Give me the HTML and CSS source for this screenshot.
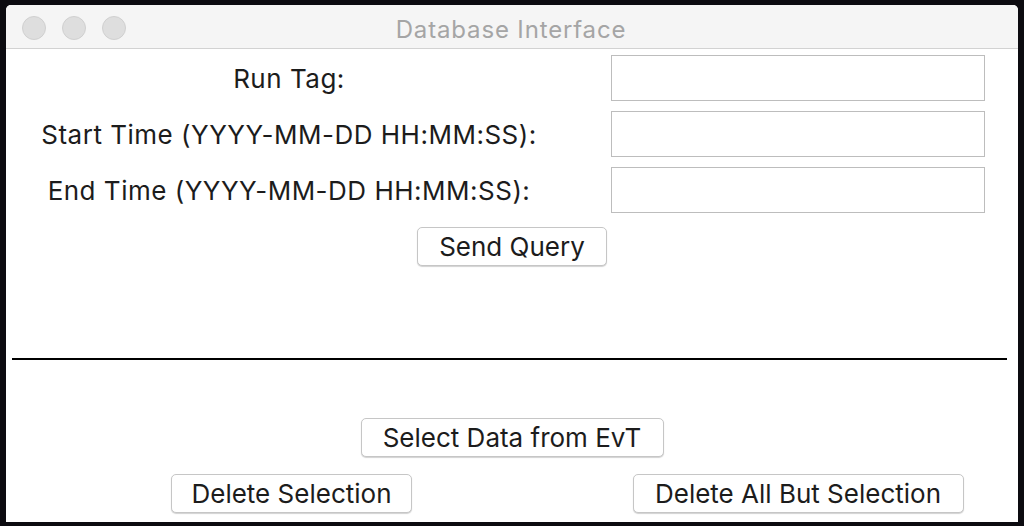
FILE: index.html
```html
<!DOCTYPE html>
<html lang="en">
<head>
<meta charset="utf-8">
<title>Database Interface</title>
<link rel="stylesheet" href="styles.css">
</head>
<body>
<div class="window">
  <div class="titlebar">
    <div class="lights">
      <span class="light"></span>
      <span class="light"></span>
      <span class="light"></span>
    </div>
    <div class="title">Database Interface</div>
  </div>
  <div class="content">
    <div class="form">
      <label class="label">Run Tag:</label>
      <div class="entry"></div>
      <label class="label">Start Time (YYYY-MM-DD HH:MM:SS):</label>
      <div class="entry"></div>
      <label class="label">End Time (YYYY-MM-DD HH:MM:SS):</label>
      <div class="entry"></div>
    </div>
    <div class="center-row query-row">
      <button class="btn btn-query">Send Query</button>
    </div>
    <div class="divider"></div>
    <div class="center-row select-row">
      <button class="btn btn-select">Select Data from EvT</button>
    </div>
    <div class="form bottom-row">
      <div class="cell"><button class="btn btn-del">Delete Selection</button></div>
      <div class="cell"><button class="btn btn-delall">Delete All But Selection</button></div>
    </div>
  </div>
</div>
</body>
</html>
```

FILE: styles.css
```css
* { box-sizing: border-box; }
html, body {
  margin: 0;
  height: 100%;
}
body {
  background: #0c0b10;
  padding: 5px 6px 0 6px;
  overflow: hidden;
  font-family: Inter, "Liberation Sans", sans-serif;
}
.window {
  width: 1012px;
  height: 517px;
  background: #ffffff;
  border-radius: 5px 5px 0 0;
  overflow: hidden;
  display: flex;
  flex-direction: column;
}
.titlebar {
  height: 44px;
  background: #f5f5f5;
  border-bottom: 1px solid #d2d2d2;
  position: relative;
  display: flex;
  align-items: center;
  justify-content: center;
  flex-shrink: 0;
}
.lights {
  position: absolute;
  left: 16px;
  top: 11px;
  display: flex;
  gap: 16px;
}
.light {
  width: 24px;
  height: 24px;
  border-radius: 50%;
  background: #dedede;
  border: 1px solid #d0d0d0;
}
.title {
  color: #a5a5a5;
  font-size: 24px;
  letter-spacing: 0.85px;
  margin-top: 5px;
  margin-left: -2px;
}
.content {
  padding: 6px 33px 0 6px;
  color: #1c1c1c;
  font-size: 26px;
  letter-spacing: 0.5px;
}
.form {
  display: grid;
  grid-template-columns: 554px 374px;
  column-gap: 45px;
  row-gap: 10px;
}
.label {
  display: flex;
  align-items: center;
  justify-content: center;
  height: 46px;
  white-space: nowrap;
}
.entry {
  height: 46px;
  border: 1px solid #bdbdbd;
  background: #fff;
}
.center-row {
  display: flex;
  justify-content: center;
  margin-left: -6px;
  margin-right: -33px;
}
.query-row { margin-top: 14px; }
.btn {
  font-family: inherit;
  font-size: 26px;
  letter-spacing: 0;
  color: #1c1c1c;
  background: #ffffff;
  border: 1px solid #c6c6c6;
  border-radius: 5px;
  box-shadow: 0 1px 1px rgba(0,0,0,0.18);
  height: 39px;
  padding: 0;
  display: flex;
  align-items: center;
  justify-content: center;
}
.btn-query { width: 190px; }
.divider {
  height: 2px;
  background: #000;
  margin: 92px -22px 0 0;
}
.select-row { margin-top: 58px; }
.btn-select { width: 303px; }
.bottom-row { margin-top: 17px; }
.cell {
  display: flex;
  justify-content: center;
}
.btn-del { width: 241px; margin-left: 5px; }
.btn-delall { width: 331px; }
```
